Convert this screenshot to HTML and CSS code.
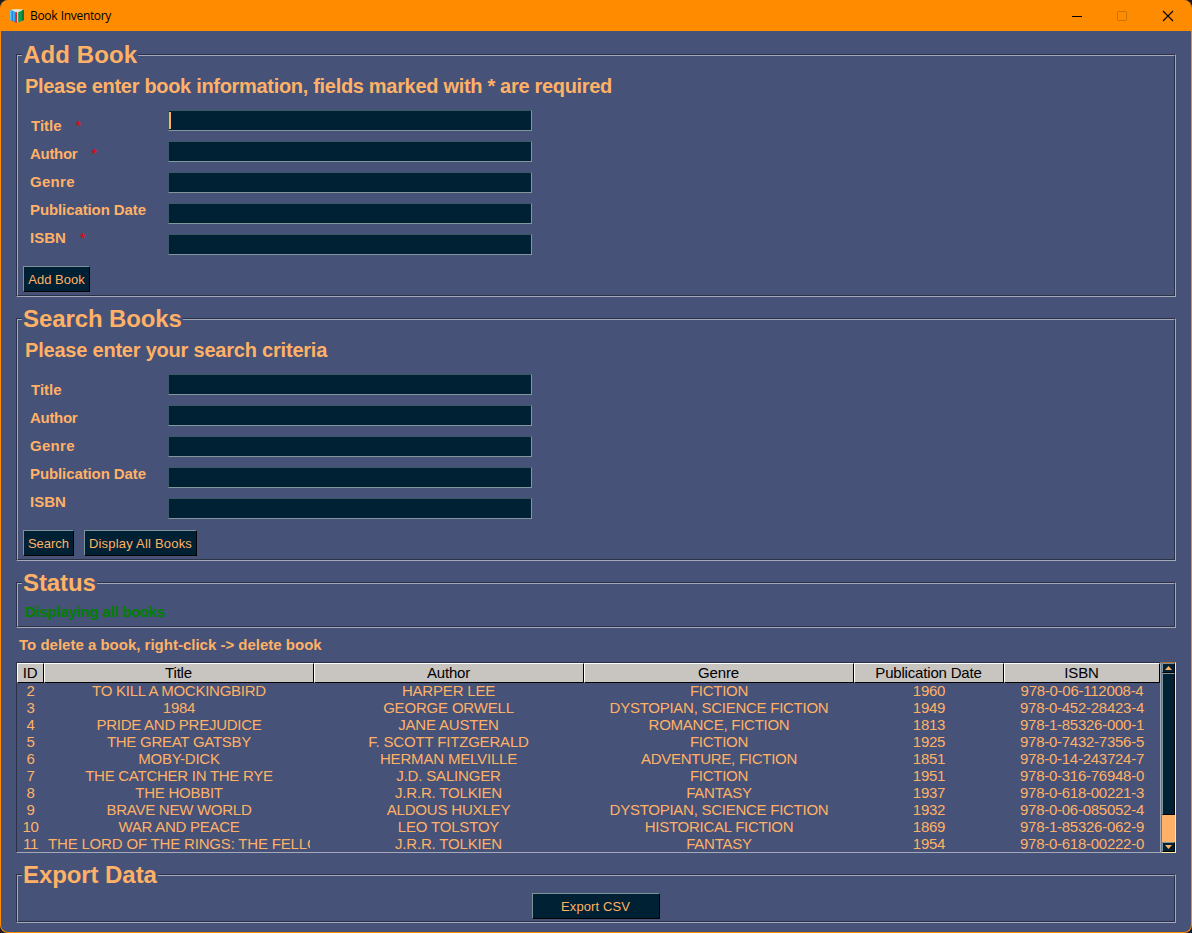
FILE: index.html
```html
<!DOCTYPE html>
<html lang="en">
<head>
<meta charset="utf-8">
<title>Book Inventory</title>
<link rel="stylesheet" href="styles.css">
</head>
<body>
<div class="window">
  <header class="titlebar">
    <svg class="app-icon" width="16" height="16" viewBox="0 0 16 16">
      <path d="M2 1.500L8 1l6 .5v3H2z" fill="#dfe6cf"/>
      <path d="M1 2l1.500.3 4.500 2.200v10L1 12z" fill="#1c86d8"/>
      <path d="M1 2l1.500.6v9.900L1 12z" fill="#5cc8f5"/>
      <path d="M4 3.200l1.500.8v9.300L4 12.500z" fill="#4db4f0"/>
      <path d="M9 4.500l4.500-2.200L15 2v10l-6 2.500z" fill="#0d9a4c"/>
      <path d="M13 2.600l2-.6v10l-2 .9z" fill="#08783a"/>
      <path d="M8 4.300h1.200v10.200H8z" fill="#b9e3f0"/>
      <path d="M6.700 4.300H8v10.700H6.700z" fill="#e02b20"/>
    </svg>
    <span class="app-name">Book Inventory</span>
    <svg class="controls" width="104" height="12" viewBox="0 0 104 12" fill="none">
      <path d="M0 6.500h10" stroke="#000"/>
      <rect x="45.500" y="1.500" width="9" height="9" rx=".8" stroke="#cc7000"/>
      <path d="M91 1l10 10M101 1l-10 10" stroke="#000" stroke-width="1.100"/>
    </svg>
  </header>
  <main class="content">
    <section class="frame frame-form"><div class="frame-inner">
      <h2 class="legend"><span class="w-add">Add Book</span></h2>
      <p class="hint hint-long">Please enter book information, fields marked with * are required</p>
      <div class="form">
        <div class="labels">
          <div class="label first">Title<i class="star">*</i></div>
          <div class="label l-author">Author<i class="star">*</i></div>
          <div class="label l-genre">Genre</div>
          <div class="label l-date">Publication Date</div>
          <div class="label">ISBN<i class="star">*</i></div>
        </div>
        <div class="inputs">
          <div class="input"><span class="caret"></span></div><div class="input"></div><div class="input"></div><div class="input"></div><div class="input"></div>
        </div>
      </div>
      <div class="buttons"><button class="btn b-add">Add Book</button></div>
    </div></section>
    <section class="frame frame-form"><div class="frame-inner">
      <h2 class="legend"><span class="w-search">Search Books</span></h2>
      <p class="hint">Please enter your search criteria</p>
      <div class="form">
        <div class="labels">
          <div class="label first">Title</div>
          <div class="label l-author">Author</div>
          <div class="label l-genre">Genre</div>
          <div class="label l-date">Publication Date</div>
          <div class="label">ISBN</div>
        </div>
        <div class="inputs">
          <div class="input"></div><div class="input"></div><div class="input"></div><div class="input"></div><div class="input"></div>
        </div>
      </div>
      <div class="buttons"><button class="btn b-search">Search</button><button class="btn b-all">Display All Books</button></div>
    </div></section>
    <section class="frame frame-status"><div class="frame-inner">
      <h2 class="legend"><span>Status</span></h2>
      <p class="status">Displaying all books</p>
    </div></section>
    <p class="note">To delete a book, right-click -&gt; delete book</p>
    <div class="table-wrap">
      <div class="table">
        <div class="row head"><span>ID</span><span>Title</span><span>Author</span><span>Genre</span><span>Publication Date</span><span>ISBN</span></div>
        <div class="row"><span>2</span><span>TO KILL A MOCKINGBIRD</span><span>HARPER LEE</span><span>FICTION</span><span>1960</span><span>978-0-06-112008-4</span></div>
        <div class="row"><span>3</span><span>1984</span><span>GEORGE ORWELL</span><span>DYSTOPIAN, SCIENCE FICTION</span><span>1949</span><span>978-0-452-28423-4</span></div>
        <div class="row"><span>4</span><span>PRIDE AND PREJUDICE</span><span>JANE AUSTEN</span><span>ROMANCE, FICTION</span><span>1813</span><span>978-1-85326-000-1</span></div>
        <div class="row"><span>5</span><span>THE GREAT GATSBY</span><span>F. SCOTT FITZGERALD</span><span>FICTION</span><span>1925</span><span>978-0-7432-7356-5</span></div>
        <div class="row"><span>6</span><span>MOBY-DICK</span><span>HERMAN MELVILLE</span><span>ADVENTURE, FICTION</span><span>1851</span><span>978-0-14-243724-7</span></div>
        <div class="row"><span>7</span><span>THE CATCHER IN THE RYE</span><span>J.D. SALINGER</span><span>FICTION</span><span>1951</span><span>978-0-316-76948-0</span></div>
        <div class="row"><span>8</span><span>THE HOBBIT</span><span>J.R.R. TOLKIEN</span><span>FANTASY</span><span>1937</span><span>978-0-618-00221-3</span></div>
        <div class="row"><span>9</span><span>BRAVE NEW WORLD</span><span>ALDOUS HUXLEY</span><span>DYSTOPIAN, SCIENCE FICTION</span><span>1932</span><span>978-0-06-085052-4</span></div>
        <div class="row"><span>10</span><span>WAR AND PEACE</span><span>LEO TOLSTOY</span><span>HISTORICAL FICTION</span><span>1869</span><span>978-1-85326-062-9</span></div>
        <div class="row"><span>11</span><span class="clipped">THE LORD OF THE RINGS: THE FELLO</span><span>J.R.R. TOLKIEN</span><span>FANTASY</span><span>1954</span><span>978-0-618-00222-0</span></div>
      </div>
      <div class="scrollbar">
        <div class="arrow"><svg width="7" height="4" viewBox="0 0 7 4"><path d="M3.500 0L7 4H0z" fill="#ffb167"/></svg></div>
        <div class="thumb"></div>
        <div class="trough"></div>
        <div class="arrow"><svg width="7" height="4" viewBox="0 0 7 4"><path d="M0 0h7L3.500 4z" fill="#ffb167"/></svg></div>
      </div>
    </div>
    <section class="frame frame-export"><div class="frame-inner">
      <h2 class="legend"><span>Export Data</span></h2>
      <button class="btn b-export">Export CSV</button>
    </div></section>
  </main>
</div>
</body>
</html>
```
FILE: styles.css
```css
* { box-sizing: border-box; }
html { background: #1c1c22; }
body { margin: 0; font-family: "Liberation Sans", Arial, sans-serif; color: #ffb167; }
h2, p { margin: 0; white-space: nowrap; }

.window { width: 1192px; height: 933px; overflow: hidden; background: #465277; border: 1px solid #ff8c00; border-top: 0; border-radius: 8px; }
.titlebar { height: 31px; background: #ff8c00; display: flex; align-items: center; padding-left: 8px; }
.app-name { margin-left: 5px; font: 12px/16px "Open Sans", sans-serif; letter-spacing: -.35px; word-spacing: 1px; color: #000; }
.controls { margin-left: auto; margin-right: 15px; }
.content { padding: 23px 15px 0; }

.frame { border: 1px solid; border-color: #2b3147 #a3a8ba #a3a8ba #2b3147; }
.frame-inner { height: 100%; border: 1px solid; border-color: #a3a8ba #2b3147 #2b3147 #a3a8ba; padding-left: 5px; }
.frame-form { height: 243px; margin-bottom: 21px; }
.frame-status { height: 46px; }
.frame-export { height: 49px; margin-top: 21px; }
.legend { margin-top: -16px; height: 30px; font-size: 24px; line-height: 30px; }
.legend span { display: inline-block; margin-left: -1px; padding: 0 1px; background: #465277; letter-spacing: -.08px; }
.legend .w-add { letter-spacing: .1px; }
.legend .w-search { letter-spacing: -.1px; }

.hint { margin: 3px 0 0 2px; font-weight: bold; font-size: 20px; line-height: 26px; letter-spacing: -.21px; }
.hint-long { letter-spacing: -.31px; }
.form { display: flex; margin-top: 11px; }
.labels { width: 145px; padding-left: 7px; padding-top: 2px; font-weight: bold; font-size: 15px; }
.label { height: 28px; line-height: 28px; white-space: nowrap; }
.label.first { padding-left: 1px; }
.l-author { letter-spacing: -.3px; }
.l-genre { letter-spacing: .3px; }
.l-date { letter-spacing: -.1px; }
.star { margin-left: 14px; color: #f00000; font: 15px/15px "Liberation Sans", sans-serif; letter-spacing: 0; }
.inputs { display: flex; flex-direction: column; gap: 10px; }
.input { width: 364px; height: 21px; background: #002133; border: 1px solid; border-color: #3c5a66 #82969c #82969c #3c5a66; padding: 1px 0; }
.caret { display: block; width: 2px; height: 17px; background: #ffb167; }

.buttons { display: flex; gap: 10px; margin-top: 11px; }
.btn { display: block; height: 26px; padding: 1px 0 0; background: #002133; color: #ffb167; border: 1px solid; border-color: #7d929a #000 #000 #7d929a; font: 13px/23px "Liberation Sans", sans-serif; white-space: nowrap; }
.b-add { width: 67px; }
.b-search { width: 51px; }
.b-all { width: 113px; letter-spacing: .2px; }
.b-export { width: 128px; margin: 3px auto 0 509px; padding-right: 1px; letter-spacing: .1px; }

.status { margin-left: 2px; margin-top: 2px; font-weight: bold; font-size: 15px; line-height: 24px; letter-spacing: -.25px; color: #008000; }
.note { margin: 8px 0 0 3px; font-weight: bold; font-size: 15px; line-height: 18px; }

.table-wrap { display: flex; margin-top: 8px; height: 191px; }
.table { width: 1145px; border: 1px solid; border-color: #2b3147 #a3a8ba #a3a8ba #2b3147; overflow: hidden; font-size: 15px; letter-spacing: -.26px; }
.row { display: grid; grid-template-columns: 27px 270px 270px 270px 150px 156px; height: 17px; line-height: 17px; text-align: center; white-space: nowrap; }
.row:not(.head) span:nth-child(3) { letter-spacing: -.18px; padding-right: 1px; }
.head { height: 19px; color: #000; letter-spacing: -.18px; }
.head span { background: #c8c4c0; border: 1px solid; border-color: #fff #000 #000 #fff; line-height: 18px; padding-right: 1px; }
.clipped { overflow: hidden; text-align: left; margin: 0 4px; letter-spacing: -.18px; }

.scrollbar { width: 15px; display: flex; flex-direction: column; border: 1px solid; border-color: #aa6a30 #fff0a0 #fff0a0 #aa6a30; background: #ffb167; }
.arrow { height: 10px; display: flex; align-items: center; justify-content: center; background: #002133; border: 1px solid; border-color: #7d929a #000 #000 #7d929a; }
.arrow svg { flex: none; }
.thumb { height: 142px; background: #002133; border: 1px solid; border-color: #7d929a #000 #000 #7d929a; }
.trough { flex: 1; }
```
